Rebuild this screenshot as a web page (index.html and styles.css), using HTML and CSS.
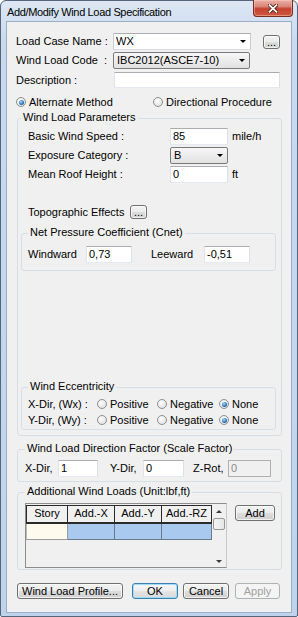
FILE: index.html
```html
<!DOCTYPE html>
<html lang="en">

<head>
    <meta charset="UTF-8">
    <meta name="viewport" content="width=device-width, initial-scale=1.0">
    <title>Add/Modify Wind Load Specification</title>
    <link rel="stylesheet" href="styles.css">
</head>

<body>
    <div class="window">
        <div class="titlebar">
            <span class="title">Add/Modify Wind Load Specification</span>
            <span class="close-btn">
                <svg width="10" height="9" viewBox="0 0 10 9">
                    <path d="M1.5 1.2 L8.5 7.8 M8.5 1.2 L1.5 7.8" stroke="#4a1510" stroke-width="3.4" stroke-linecap="square" fill="none"/>
                    <path d="M1.5 1.2 L8.5 7.8 M8.5 1.2 L1.5 7.8" stroke="#fff" stroke-width="1.8" stroke-linecap="square" fill="none"/>
                </svg>
            </span>
        </div>

        <div class="client">
            <div class="row">
                <span class="lbl lbl-main">Load Case Name :</span>
                <div class="combo w-case"><span>WX</span><span class="arrow"></span></div>
                <button class="btn btn-dots">...</button>
            </div>
            <div class="row row-code">
                <span class="lbl lbl-main">Wind Load Code &nbsp;:</span>
                <div class="combo list w-code"><span>IBC2012(ASCE7-10)</span><span class="arrow"></span></div>
            </div>
            <div class="row row-desc">
                <span class="lbl lbl-main">Description :</span>
                <div class="edit w-desc"></div>
            </div>
            <div class="row row-method">
                <span class="opt opt-alt"><span class="radio on"></span>Alternate Method</span>
                <span class="opt"><span class="radio"></span>Directional Procedure</span>
            </div>

            <fieldset class="group group-params">
                <legend>Wind Load Parameters</legend>
                <div class="prow">
                    <span class="lbl lbl-param">Basic Wind Speed :</span>
                    <div class="edit w-param"><span>85</span></div>
                    <span class="unit">mile/h</span>
                </div>
                <div class="prow">
                    <span class="lbl lbl-param">Exposure Category :</span>
                    <div class="combo list w-param"><span>B</span><span class="arrow"></span></div>
                </div>
                <div class="prow">
                    <span class="lbl lbl-param">Mean Roof Height :</span>
                    <div class="edit w-param"><span>0</span></div>
                    <span class="unit">ft</span>
                </div>
                <div class="prow row-topo">
                    <span class="lbl lbl-topo">Topographic Effects</span>
                    <button class="btn btn-dots">...</button>
                </div>

                <fieldset class="group inner group-cnet">
                    <legend>Net Pressure Coefficient (Cnet)</legend>
                    <div class="irow">
                        <span class="lbl lbl-wind">Windward</span>
                        <div class="edit w-cnet"><span>0,73</span></div>
                        <span class="lbl lbl-lee">Leeward</span>
                        <div class="edit w-cnet"><span>-0,51</span></div>
                    </div>
                </fieldset>

                <fieldset class="group inner group-ecc">
                    <legend>Wind Eccentricity</legend>
                    <div class="irow erow">
                        <span class="lbl lbl-dir">X-Dir, (Wx) :</span>
                        <span class="opt opt-pos"><span class="radio"></span>Positive</span>
                        <span class="opt opt-neg"><span class="radio"></span>Negative</span>
                        <span class="opt"><span class="radio on"></span>None</span>
                    </div>
                    <div class="irow erow">
                        <span class="lbl lbl-dir">Y-Dir, (Wy) :</span>
                        <span class="opt opt-pos"><span class="radio"></span>Positive</span>
                        <span class="opt opt-neg"><span class="radio"></span>Negative</span>
                        <span class="opt"><span class="radio on"></span>None</span>
                    </div>
                </fieldset>
            </fieldset>

            <fieldset class="group group-factor">
                <legend>Wind Load Direction Factor (Scale Factor)</legend>
                <div class="frow">
                    <span class="lbl lbl-x">X-Dir,</span>
                    <div class="edit w-fx"><span>1</span></div>
                    <span class="lbl lbl-y">Y-Dir,</span>
                    <div class="edit w-fy"><span>0</span></div>
                    <span class="lbl lbl-z">Z-Rot,</span>
                    <div class="edit disabled w-fz"><span>0</span></div>
                </div>
            </fieldset>

            <fieldset class="group group-add">
                <legend>Additional Wind Loads (Unit:lbf,ft)</legend>
                <div class="arow">
                    <div class="grid">
                        <div class="grid-body">
                            <div class="cells">
                                <span class="hcell">Story</span>
                                <span class="hcell">Add.-X</span>
                                <span class="hcell">Add.-Y</span>
                                <span class="hcell">Add.-RZ</span>
                                <span class="dcell story"></span>
                                <span class="dcell val"></span>
                                <span class="dcell val"></span>
                                <span class="dcell val"></span>
                            </div>
                        </div>
                        <div class="vscroll">
                            <span class="sarrow up"></span>
                            <span class="thumb"></span>
                            <span class="sarrow down"></span>
                        </div>
                    </div>
                    <button class="btn btn-add">Add</button>
                </div>
            </fieldset>

            <div class="buttons">
                <button class="btn btn-profile">Wind Load Profile...</button>
                <button class="btn btn-ok">OK</button>
                <button class="btn btn-cancel">Cancel</button>
                <button class="btn btn-apply" disabled>Apply</button>
            </div>
        </div>
    </div>
</body>

</html>
```

FILE: styles.css
```css
* {
    box-sizing: border-box;
}

body {
    margin: 0;
    font-family: "Liberation Sans", Arial, sans-serif;
    font-size: 11px;
    color: #000;
    background: #fff;
}

/* window frame */
.window {
    width: 298px;
    height: 617px;
    border: 1px solid #55657a;
    border-radius: 6px 6px 2px 2px;
    background: linear-gradient(#dde7f4, #c9daef 40px, #bfd4eb);
    padding: 0 5px 3px;
    display: flex;
    flex-direction: column;
}

.titlebar {
    height: 20px;
    display: flex;
    justify-content: space-between;
    align-items: flex-start;
}

.title {
    padding: 5px 0 0 1px;
    line-height: 13px;
    letter-spacing: -0.35px;
}

.close-btn {
    width: 40px;
    height: 17px;
    margin: -1px -1px 0 0;
    border: 1px solid #7a2a20;
    border-top: none;
    border-radius: 0 0 4px 4px;
    background: linear-gradient(#eab1a6, #d98677 40%, #c5422f 55%, #d0583f);
    box-shadow: inset 0 0 0 1px rgba(255, 210, 200, 0.45);
    display: flex;
    align-items: center;
    justify-content: center;
}

.client {
    flex: 1;
    background: #f0f0f0;
    border: 1px solid #9aaec6;
    padding: 11px 0 0 9px;
    display: flex;
    flex-direction: column;
}

.row {
    display: flex;
    align-items: center;
}

.lbl {
    white-space: nowrap;
    line-height: 13px;
}

.lbl-main {
    width: 97px;
}

.row-code {
    margin-top: 2px;
}

.row-desc {
    margin-top: 3px;
}

.row-method {
    margin-top: 7px;
    height: 14px;
}

/* controls */
.edit,
.combo {
    height: 17px;
    background: #fff;
    border: 1px solid #abadb3;
    border-color: #abadb3 #dbdfe6 #e3e9ef #e2e3ea;
    padding: 0 2px;
    display: flex;
    align-items: center;
    line-height: 13px;
}

.combo {
    justify-content: space-between;
    padding-right: 4px;
    border-color: #abadb3 #c8ccd2 #d8dce2 #c8ccd2;
}

.combo.list {
    border: 1px solid #7a7a7a;
    border-radius: 2px;
    background: linear-gradient(#f7f7f7, #ececec 50%, #e2e2e2);
    padding-left: 3px;
}

.arrow {
    width: 0;
    height: 0;
    border-left: 3px solid transparent;
    border-right: 3px solid transparent;
    border-top: 3px solid #000;
}

.edit.disabled {
    background: #f0f0f0;
    border-color: #afafaf;
    color: #8a8a8a;
}

.w-case {
    width: 138px;
}

.w-code {
    width: 137px;
}

.w-desc {
    width: 166px;
    height: 16px;
    margin-left: 1px;
}

.btn {
    font-family: "Liberation Sans", Arial, sans-serif;
    font-size: 11px;
    color: #000;
    height: 16px;
    padding: 0;
    line-height: 14px;
    border: 1px solid #707070;
    border-radius: 3px;
    background: linear-gradient(#f3f3f3, #ebebeb 50%, #dddddd 51%, #d0d0d0);
    box-shadow: inset 0 0 0 1px rgba(255, 255, 255, 0.7);
}

.btn-dots {
    width: 17px;
    height: 14px;
    margin-left: 12px;
    line-height: 10px;
}

/* radio buttons */
.opt {
    display: flex;
    align-items: center;
    gap: 3px;
    white-space: nowrap;
    line-height: 13px;
}

.opt-alt {
    width: 137px;
}

.radio {
    width: 10px;
    height: 10px;
    border-radius: 50%;
    border: 1px solid #8e8f8f;
    background: radial-gradient(circle at 40% 35%, #fdfdfd, #dadada);
    display: flex;
    align-items: center;
    justify-content: center;
}

.radio.on::after {
    content: "";
    width: 5px;
    height: 5px;
    border-radius: 50%;
    background: radial-gradient(circle at 40% 35%, #9fdcfb, #2a6fb4 60%, #17477c);
}

/* group boxes */
.group {
    margin: 0 0 0 1px;
    border: 1px solid #d5dfe5;
    border-radius: 3px;
    min-width: 0;
}

.group legend {
    padding: 0 2px 2px;
    line-height: 13px;
    white-space: nowrap;
}

.group-params {
    width: 265px;
    margin-top: 2px;
    padding: 2px 6px 5px 3px;
}

.prow {
    display: flex;
    align-items: center;
    margin-left: 7px;
    margin-bottom: 2px;
}

.lbl-param {
    width: 142px;
}

.w-param {
    width: 58px;
}

.unit {
    margin-left: 4px;
    line-height: 13px;
}

.row-topo {
    margin-top: 22px;
    margin-bottom: 0;
    height: 14px;
}

.lbl-topo {
    width: 102px;
}

.row-topo .btn-dots {
    margin-left: 0;
}

.group.inner {
    margin-left: 0;
    width: 255px;
    padding-left: 6px;
}

.group-cnet {
    margin-top: 7px;
    padding-top: 5px;
    padding-bottom: 7px;
}

.irow {
    display: flex;
    align-items: center;
}

.lbl-wind {
    width: 58px;
}

.w-cnet {
    width: 46px;
}

.lbl-lee {
    margin-left: 19px;
    width: 53px;
}

.group-ecc {
    margin-top: 109px;
    padding-top: 1px;
    padding-bottom: 1px;
}

.erow {
    height: 16px;
}

.lbl-dir {
    width: 69px;
}

.opt-pos {
    width: 60px;
}

.opt-neg {
    width: 62px;
}

.group-factor {
    width: 265px;
    margin-top: 6px;
    padding: 3px 0 4px 7px;
}

.frow {
    display: flex;
    align-items: center;
}

.lbl-x {
    width: 33px;
}

.w-fx {
    width: 40px;
}

.lbl-y {
    margin-left: 12px;
    width: 33px;
}

.w-fy {
    width: 41px;
}

.lbl-z {
    margin-left: 9px;
    width: 35px;
}

.w-fz {
    width: 43px;
}

.group-add {
    width: 265px;
    margin-top: 3px;
    padding: 3px 0 1px 7px;
}

.arow {
    display: flex;
    align-items: flex-start;
}

/* grid */
.grid {
    width: 202px;
    height: 65px;
    border: 1px solid #8c8c8c;
    border-right-color: #c8c8c8;
    display: flex;
}

.grid-body {
    flex: 1;
    padding-top: 1px;
}

.cells {
    display: grid;
    grid-template-columns: 42px 47px 47px 50px;
    grid-template-rows: 19px 16px;
}

.hcell {
    background: #f0f0f0;
    border: 1px solid #2a2a2a;
    border-left: none;
    border-bottom-width: 2px;
    text-align: center;
    line-height: 15px;
}

.hcell:first-child {
    border-left: 1px solid #2a2a2a;
}

.dcell {
    border-right: 1px solid #6a7a8c;
    border-bottom: 1px solid #6a7a8c;
}

.dcell.story {
    background: #fffaee;
    border-left: 1px solid #b9b9b9;
    border-right-color: #9a9a9a;
    border-bottom-color: #9a9a9a;
}

.dcell.val {
    background: #a9c9ef;
}

.vscroll {
    width: 15px;
    display: flex;
    flex-direction: column;
    align-items: center;
    padding: 6px 0 4px;
}

.sarrow {
    width: 0;
    height: 0;
    border-left: 3px solid transparent;
    border-right: 3px solid transparent;
}

.sarrow.up {
    border-bottom: 3px solid #3a3a3a;
}

.sarrow.down {
    border-top: 3px solid #3a3a3a;
    margin-top: auto;
}

.thumb {
    width: 12px;
    height: 12px;
    margin-top: 5px;
    border: 1px solid #979797;
    border-radius: 2px;
    background: linear-gradient(90deg, #f4f4f4, #e6e6e6);
}

.btn-add {
    width: 40px;
    margin: 2px 0 0 8px;
}

/* bottom buttons */
.buttons {
    display: flex;
    margin: 13px 0 0 1px;
}

.btn-profile {
    width: 106px;
}

.btn-ok {
    width: 46px;
    margin-left: 9px;
    border-color: #3c7fb1;
    box-shadow: inset 0 0 0 1px #9fdcfb;
    background: linear-gradient(#f6f6f6, #eeeeee 50%, #e4e4e4 51%, #dadada);
}

.btn-cancel {
    width: 46px;
    margin-left: 5px;
}

.btn-apply {
    width: 45px;
    margin-left: 6px;
    color: #a0a0a0;
    border-color: #adb2b5;
    background: #f4f4f4;
    box-shadow: none;
}
```
